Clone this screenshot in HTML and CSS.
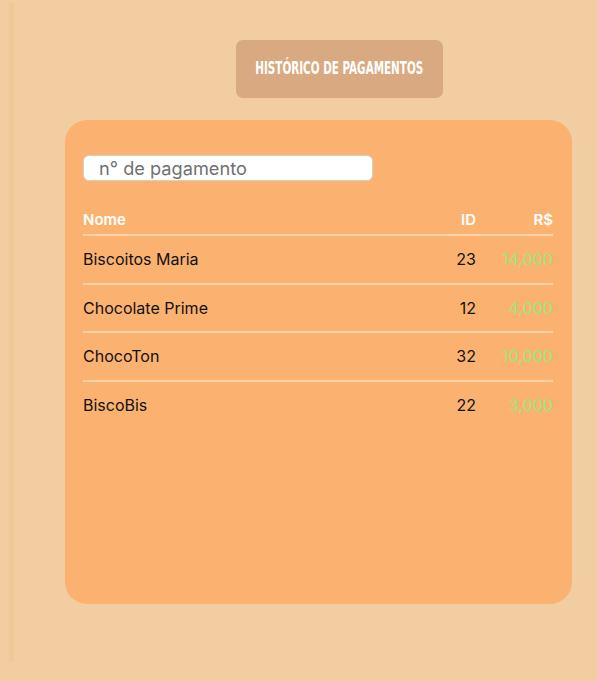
FILE: index.html
```html
<!DOCTYPE html>
<html lang="pt">
<head>
<meta charset="utf-8">
<title>Histórico de pagamentos</title>
<link rel="stylesheet" href="styles.css">
</head>
<body>
<div class="page">
  <div class="rail"></div>
  <main class="main">
    <div class="title-btn"><span class="title-text">HISTÓRICO DE PAGAMENTOS</span></div>
    <section class="card">
      <input class="search" type="text" placeholder="n° de pagamento">
      <div class="table">
        <div class="row head">
          <span class="c-name">Nome</span>
          <span class="c-id">ID</span>
          <span class="c-val">R$</span>
        </div>
        <div class="row">
          <span class="c-name">Biscoitos Maria</span>
          <span class="c-id">23</span>
          <span class="c-val">14,000</span>
        </div>
        <div class="row">
          <span class="c-name">Chocolate Prime</span>
          <span class="c-id">12</span>
          <span class="c-val">4,000</span>
        </div>
        <div class="row">
          <span class="c-name">ChocoTon</span>
          <span class="c-id">32</span>
          <span class="c-val">10,000</span>
        </div>
        <div class="row last">
          <span class="c-name">BiscoBis</span>
          <span class="c-id">22</span>
          <span class="c-val">3,000</span>
        </div>
      </div>
    </section>
  </main>
</div>
</body>
</html>
```
FILE: styles.css
```css
html, body {
  margin: 0;
  padding: 0;
}
body {
  background: #f2cda2;
  font-family: Inter, "Noto Sans", sans-serif;
  width: 597px;
  height: 681px;
  overflow: hidden;
}
.page {
  display: flex;
  align-items: flex-start;
  height: 681px;
}
.rail {
  margin-left: 9px;
  margin-top: 3px;
  width: 5px;
  height: 659px;
  background: #efc898;
  flex: none;
}
.main {
  display: flex;
  flex-direction: column;
  align-items: flex-start;
}
.title-btn {
  margin-left: 222px;
  margin-top: 40px;
  width: 207px;
  height: 58px;
  background: #d9aa81;
  border-radius: 7px;
  display: flex;
  align-items: center;
  justify-content: center;
  overflow: hidden;
}
.title-text {
  display: inline-block;
  font-family: "DejaVu Sans Condensed", "Liberation Sans Narrow", sans-serif;
  font-stretch: condensed;
  font-weight: bold;
  font-size: 17.5px;
  color: #ffffff;
  white-space: nowrap;
  transform: scaleX(0.66);
  margin-top: -2px;
}
.card {
  margin-left: 51px;
  margin-top: 22px;
  width: 507px;
  height: 484px;
  box-sizing: border-box;
  background: #fbb271;
  border-radius: 22px;
  padding: 35px 19px 0 18px;
}
.search {
  display: block;
  width: 290px;
  height: 26px;
  box-sizing: border-box;
  border: 1px solid #d6d0ca;
  border-radius: 6px;
  background: #ffffff;
  padding: 0 0 0 15px;
  font-family: Inter, "Noto Sans", sans-serif;
  font-size: 18.2px;
  color: #333;
  outline: none;
}
.search::placeholder {
  color: #707070;
}
.table {
  margin-top: 23px;
}
.row {
  display: grid;
  grid-template-columns: 1fr 60px 77px;
  align-items: center;
  height: 46.5px;
  border-bottom: 2px solid #fcd2ab;
  font-size: 16px;
  font-weight: 400;
  color: #111111;
}
.row.last {
  border-bottom: none;
}
.row.head {
  height: 30px;
  color: #ffffff;
  font-size: 15px;
  font-weight: 600;
}
.c-id, .c-val {
  text-align: right;
}
.row .c-val {
  color: #9de47a;
  font-weight: 400;
}
.row.head .c-val {
  color: #ffffff;
  font-weight: 600;
}
```
